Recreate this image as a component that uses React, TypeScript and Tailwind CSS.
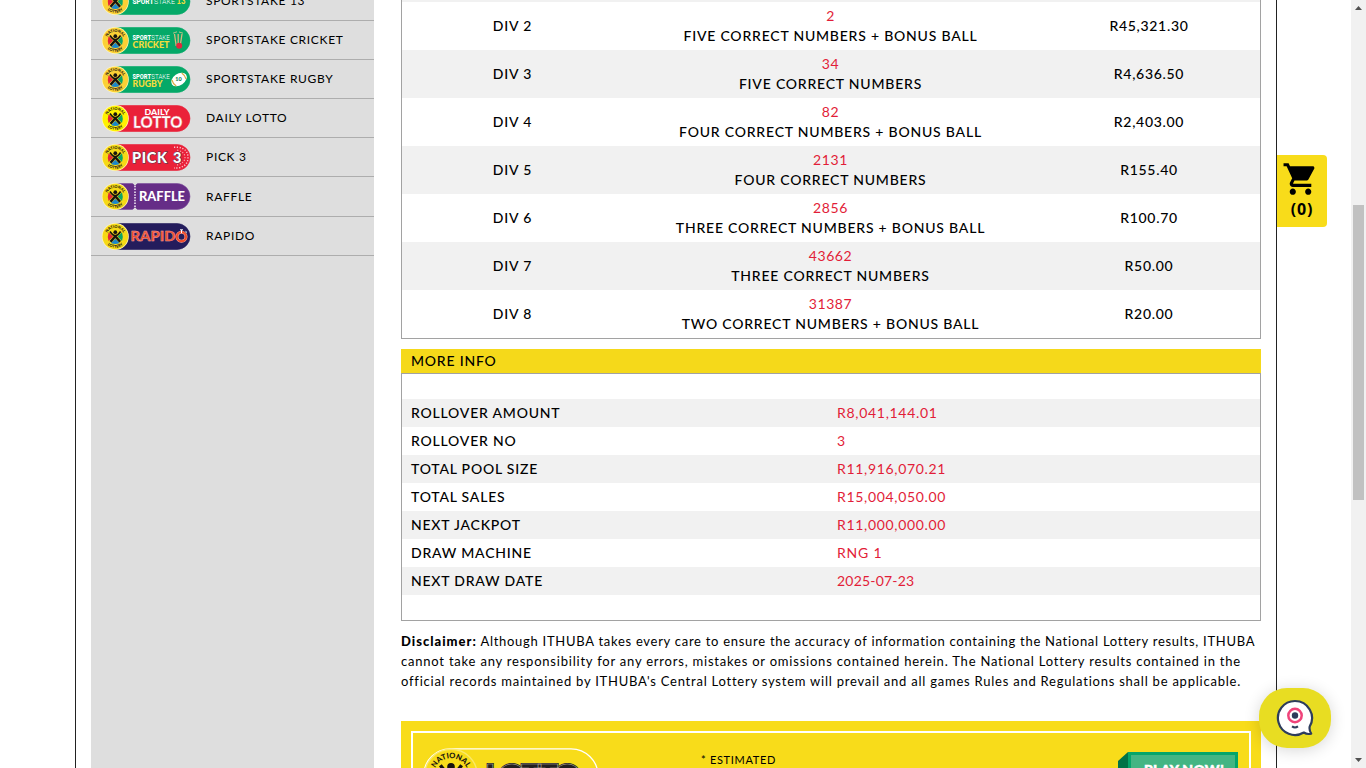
import React from "react";

const LATO = "font-['Lato','Liberation_Sans',sans-serif]";

function Emblem({ id, fill = "#f6dc1b", mono = false }: { id: string; fill?: string; mono?: boolean }) {
  const top = `${id}-top`;
  const bottom = `${id}-bottom`;
  return (
    <g>
      <circle cx="13.5" cy="13.5" r="13.5" fill={mono ? "#fbe96a" : "#fff6b8"} />
      <circle cx="13.5" cy="13.5" r="12.8" fill={fill} />
      <defs>
        <path id={top} d="M4.8 13.5a8.7 8.7 0 0 1 17.4 0" />
        <path id={bottom} d="M2.2 13.5a11.3 11.3 0 0 0 22.6 0" />
      </defs>
      {!mono && (
        <g>
          <path d="M6.8 9.2 11.2 13.6 6.8 18Q5.3 13.5 6.8 9.2Z" fill="#e32636" />
          <path d="M20.2 9.2 15.8 13.6 20.2 18Q21.7 13.5 20.2 9.2Z" fill="#0aa568" />
          <path d="M9.2 20 13.5 15.7 17.8 20Q13.5 21.8 9.2 20Z" fill="#1b86c8" />
        </g>
      )}
      <circle cx="13.5" cy="9.2" r="1.9" fill="#17130f" />
      <path d="M8.2 8.4Q11.2 12.6 13.5 12.6T18.8 8.4" fill="none" stroke="#17130f" strokeWidth="1.7" />
      <path d="M13.5 13.2 8.7 18.7M13.5 13.2l4.8 5.5" stroke="#17130f" strokeWidth="2.4" />
      <text fontFamily="Lato" fontWeight="900" fontSize="3.8" fill="#17130f" textAnchor="middle">
        <textPath href={`#${top}`} startOffset="50%">NATIONAL</textPath>
      </text>
      <text fontFamily="Lato" fontWeight="900" fontSize="3.9" fill="#17130f" textAnchor="middle">
        <textPath href={`#${bottom}`} startOffset="50%">LOTTERY</textPath>
      </text>
    </g>
  );
}

function Sport({ name, width }: { name: string; width: number }) {
  return (
    <g fontFamily="Roboto">
      <text x="31.5" y="12.8" fontSize="8" fontWeight="800" fill="#fff" textLength="18.5" lengthAdjust="spacingAndGlyphs">SPORT</text>
      <text x="50.3" y="12.8" fontSize="8" fontWeight="300" fill="#fff" textLength="18.5" lengthAdjust="spacingAndGlyphs">STAKE</text>
      <text x="31.5" y="21.4" fontSize="9" fontWeight="900" fontFamily="Lato" fill="#f6dc3b" textLength={width} lengthAdjust="spacingAndGlyphs">{name}</text>
    </g>
  );
}

function Logo({ kind }: { kind: string }) {
  const bg: Record<string, string> = {
    s13: "#05a968", cricket: "#05a968", rugby: "#05a968", daily: "#ea2139", pick: "#ea2139", raffle: "#662d87", rapido: "#241c5c",
  };
  const sport = kind === "s13" || kind === "cricket" || kind === "rugby";
  return (
    <svg className="block h-[27px] w-[90px] shrink-0" viewBox="0 0 90 27">
      <path d="M14 .5H76a13 13 0 0 1 0 26H14Z" fill={bg[kind]} stroke={kind === "raffle" ? "#7b4a9b" : bg[kind]} strokeWidth=".6" />
      <g transform="translate(.8 0)">
        <Emblem id={kind} fill={sport ? "#fbd035" : kind === "daily" ? "#fff200" : "#f6d916"} />
      </g>
      {kind === "s13" && (
        <g fontFamily="Roboto">
          <text x="31.5" y="15.5" fontSize="8" fontWeight="800" fill="#fff" textLength="21" lengthAdjust="spacingAndGlyphs">SPORT</text>
          <text x="53" y="15.5" fontSize="8" fontWeight="300" fill="#fff" textLength="21" lengthAdjust="spacingAndGlyphs">STAKE</text>
          <text x="75.5" y="15.5" fontSize="8.5" fontWeight="900" fontFamily="Lato" fill="#f6dc3b" textLength="9" lengthAdjust="spacingAndGlyphs">13</text>
        </g>
      )}
      {kind === "cricket" && (
        <g>
          <Sport name="CRICKET" width={37} />
          <path d="m73.5 7 1.7 12M77.2 7v11M81 7l-1.8 12" stroke="#d9b67c" strokeWidth="1.3" />
          <path d="m72 6.2 4-1.4M78 5l4 1.2" stroke="#e7c894" strokeWidth=".8" />
          <circle cx="78.2" cy="18.7" r="3" fill="#df293d" />
        </g>
      )}
      {kind === "rugby" && (
        <g>
          <Sport name="RUGBY" width={30} />
          <g transform="rotate(-35 78 13.5)">
            <ellipse cx="78" cy="13.5" rx="8.6" ry="5.8" fill="#fff" />
            <path d="M72 9.7q-1.5 3.8 0 7.6M84 9.7q1.5 3.8 0 7.6" stroke="#d8a83d" strokeWidth="1.2" fill="none" />
          </g>
          <text x="77.5" y="15.3" fontFamily="Lato" fontWeight="900" fontSize="5.5" fill="#177c4c" textAnchor="middle">10</text>
        </g>
      )}
      {kind === "daily" && (
        <g fontFamily="Lato" fontWeight="900" fill="#fff">
          <text x="43.5" y="9.5" fontSize="8" textLength="25" lengthAdjust="spacingAndGlyphs">DAILY</text>
          <text x="32" y="23" fontSize="16" textLength="49.5" lengthAdjust="spacingAndGlyphs" stroke="#df7781" strokeWidth=".4">LOTTO</text>
        </g>
      )}
      {kind === "pick" && (
        <g>
          <g fontFamily="Lato" fontWeight="900" fontSize="14.5" fill="#fff" stroke="#31415e" strokeWidth=".9" paintOrder="stroke">
            <text x="31" y="18.5" textLength="35">PICK</text>
            <text x="72" y="18.5">3</text>
          </g>
          <path d="M73 3.2h4q10 1.5 10 10.3T77 24h-4" fill="none" stroke="#fbc6cb" strokeWidth="1.4" strokeDasharray="1.2 1.6" />
          <path d="M76 6q8 2 8 7.5T76 21" fill="none" stroke="#f7a7af" strokeWidth="1.2" strokeDasharray="1.2 1.6" />
        </g>
      )}
      {kind === "raffle" && (
        <g>
          <path d="M34 0v27" stroke="#e5d9ec" strokeWidth="1.7" strokeDasharray="1.5 1.3" />
          <path d="M31.5 0h5L34 2.7ZM31.5 27h5L34 24.3Z" fill="#dedede" />
          <text x="38" y="18" fontFamily="Lato" fontWeight="900" fontSize="12.5" fill="#fff" textLength="46" lengthAdjust="spacingAndGlyphs">RAFFLE</text>
        </g>
      )}
      {kind === "rapido" && (
        <g>
          <text x="29.5" y="18.4" fontFamily="Lato" fontWeight="900" fontSize="14" fill="#ef4d2d" stroke="#f7a9a0" strokeWidth=".4" textLength="45" lengthAdjust="spacingAndGlyphs">RAPID</text>
          <circle cx="80.5" cy="13.7" r="4.5" fill="none" stroke="#f7b0a5" strokeWidth="3" />
          <circle cx="80.5" cy="13.7" r="4.5" fill="none" stroke="#ef4d2d" strokeWidth="2.2" />
          <path d="M80.5 7v3M79 6.8h3M84.5 8.300l1.500 1.200" stroke="#fff" strokeWidth="1" />
        </g>
      )}
    </svg>
  );
}

const games = [
  { kind: "s13", name: "SPORTSTAKE 13", row: "h-[39px]" },
  { kind: "cricket", name: "SPORTSTAKE CRICKET", row: "h-[39px]" },
  { kind: "rugby", name: "SPORTSTAKE RUGBY", row: "h-[39px]" },
  { kind: "daily", name: "DAILY LOTTO", row: "h-[39px]" },
  { kind: "pick", name: "PICK 3", row: "h-[39px]" },
  { kind: "raffle", name: "RAFFLE", row: "h-[40px]" },
  { kind: "rapido", name: "RAPIDO", row: "h-[39px]" },
];

const divisions = [
  ["DIV 2", "2", "FIVE CORRECT NUMBERS + BONUS BALL", "R45,321.30"],
  ["DIV 3", "34", "FIVE CORRECT NUMBERS", "R4,636.50"],
  ["DIV 4", "82", "FOUR CORRECT NUMBERS + BONUS BALL", "R2,403.00"],
  ["DIV 5", "2131", "FOUR CORRECT NUMBERS", "R155.40"],
  ["DIV 6", "2856", "THREE CORRECT NUMBERS + BONUS BALL", "R100.70"],
  ["DIV 7", "43662", "THREE CORRECT NUMBERS", "R50.00"],
  ["DIV 8", "31387", "TWO CORRECT NUMBERS + BONUS BALL", "R20.00"],
];

const info = [
  { label: "ROLLOVER AMOUNT", value: "R8,041,144.01", track: "tracking-[0.7px]" },
  { label: "ROLLOVER NO", value: "3", track: "tracking-[0.7px]" },
  { label: "TOTAL POOL SIZE", value: "R11,916,070.21", track: "tracking-[0.68px]" },
  { label: "TOTAL SALES", value: "R15,004,050.00", track: "tracking-[0.68px]" },
  { label: "NEXT JACKPOT", value: "R11,000,000.00", track: "tracking-[0.68px]" },
  { label: "DRAW MACHINE", value: "RNG 1", track: "tracking-[0.8px]" },
  { label: "NEXT DRAW DATE", value: "2025-07-23", track: "tracking-[0.2px]" },
];

function Sidebar() {
  return (
    <aside className="h-[768px] w-[283px] shrink-0 overflow-hidden bg-[#dedede]">
      <div className="-mt-[18px]">
        {games.map((g) => (
          <div key={g.kind} className={`flex items-center border-b border-[#adadad] pl-[10px] ${g.row}`}>
            <Logo kind={g.kind} />
            <span className="ml-[15px] text-[12px] tracking-[0.68px] text-black">{g.name}</span>
          </div>
        ))}
      </div>
    </aside>
  );
}

function Banner() {
  return (
    <section className="mt-[30px] h-[120px] bg-[#f8dc1a] p-[10px]">
      <div className="flex h-full items-start border-2 border-white">
        <svg className="ml-[10px] mt-[14px] block h-[54px] w-[178px]" viewBox="0 0 178 54">
          <path d="M27 1.8H148a27 27 0 0 1 27 27V54H1V27A26 26 0 0 1 27 1.8Z" fill="#f8dc1a" stroke="#fff" strokeWidth="1.3" />
          <g transform="translate(1 1.5) scale(2)">
            <Emblem id="banner" fill="#f8dc1a" mono />
          </g>
          <g fontFamily="Lato" fontWeight="900" fontSize="34" fill="#231f20">
            <text x="62" y="42" textLength="96" stroke="#231f20" strokeWidth="2">LOTTO</text>
            <text x="62" y="42" textLength="96" fill="none" stroke="#b5aea0" strokeWidth=".6">LOTTO</text>
          </g>
        </svg>
        <span className="ml-[100px] mt-[20px] w-[300px] text-[11px] leading-[13px] tracking-[0.7px] text-black">* ESTIMATED</span>
        <svg className="ml-[116px] mt-[18px] block h-[50px] w-[122px]" viewBox="0 0 122 50">
          <path d="M1 10 11 1v40H1Z" fill="#007347" />
          <path d="M11 1h110v45H11Z" fill="#05a56a" />
          <path d="M14 4h104v42H14Z" fill="#43b583" />
          <text x="27" y="23.6" fontFamily="Lato" fontWeight="900" fontSize="14" fill="#fff" stroke="#fff" strokeWidth=".5" textLength="80">PLAY NOW!</text>
        </svg>
      </div>
    </section>
  );
}

export default function App() {
  return (
    <div className={`relative flex h-[768px] w-[1366px] overflow-hidden bg-white pl-[75px] ${LATO}`}>
      <div className="flex w-[1202px] shrink-0 border-x border-[#222] pl-[15px]">
        <Sidebar />
        <main className="ml-[27px] w-[860px] shrink-0">
          <section className="border-x border-b border-[#a2a2a2] text-[14px] leading-[20px] text-black">
            <div className="h-[2px] bg-[#f1f1f1]" />
            {divisions.map(([div, count, label, amount], i) => (
              <div key={div} className={`grid h-[48px] grid-cols-[221px_415px_222px] items-center text-center ${i % 2 ? "bg-[#f1f1f1]" : "bg-white"}`}>
                <span className="font-medium tracking-[0.8px]">{div}</span>
                <span>
                  <span className="block tracking-[0.6px] text-[#e21d38]">{count}</span>
                  <span className="block whitespace-nowrap font-medium tracking-[0.79px]">{label}</span>
                </span>
                <span className="font-medium tracking-[0.7px]">{amount}</span>
              </div>
            ))}
          </section>

          <section className="mt-[10px] text-[14px] font-medium tracking-[0.79px] text-black">
            <h2 className="h-[24px] bg-[#f5d91a] pl-[10px] leading-[24px]">MORE INFO</h2>
            <div className="border border-[#a2a2a2] py-[25px]">
              {info.map(({ label, value, track }, i) => (
                <div key={label} className={`grid h-[28px] grid-cols-[426px_1fr] pl-[9px] leading-[27px] ${i % 2 ? "bg-white" : "bg-[#f1f1f1]"}`}>
                  <span>{label}</span>
                  <span className={`font-normal text-[#e21d38] ${track}`}>{value}</span>
                </div>
              ))}
            </div>
          </section>

          <p className="mt-[10px] text-[13px] leading-[20px] text-black">
            <span className="block whitespace-nowrap tracking-[0.72px]"><b className="font-black tracking-[1px]">Disclaimer:</b> Although ITHUBA takes every care to ensure the accuracy of information containing the National Lottery results, ITHUBA</span>
            <span className="block whitespace-nowrap tracking-[0.785px]">cannot take any responsibility for any errors, mistakes or omissions contained herein. The National Lottery results contained in the</span>
            <span className="block whitespace-nowrap tracking-[0.767px]">official records maintained by ITHUBA's Central Lottery system will prevail and all games Rules and Regulations shall be applicable.</span>
          </p>
          <Banner />
        </main>
      </div>

      <div className="mt-[155px] flex h-[72px] w-[50px] flex-col items-center rounded-r-[4px] bg-[#f8dc1a]">
        <svg className="-ml-[3px] mt-[5px] block h-[38px] w-[37px] shrink-0" viewBox="0 0 24 24" preserveAspectRatio="none">
          <path d="M7 18c-1.100 0-1.990.9-1.990 2S5.900 22 7 22s2-.9 2-2-.9-2-2-2zM1 2v2h2l3.600 7.590-1.350 2.450c-.16.28-.25.61-.25.96 0 1.100.9 2 2 2h12v-2H7.420c-.14 0-.25-.11-.25-.25l.03-.12.9-1.630h7.450c.75 0 1.410-.41 1.750-1.030l3.580-6.490c.08-.14.12-.31.12-.48 0-.55-.45-1-1-1H5.210l-.94-2H1zm16 16c-1.100 0-1.990.9-1.990 2s.89 2 1.990 2 2-.9 2-2-.9-2-2-2z" />
        </svg>
        <span className="font-['Open_Sans',sans-serif] text-[16px] font-bold leading-[22px] tracking-[0.8px] text-black">(0)</span>
      </div>

      <div className="ml-auto flex h-[768px] w-[15px] flex-col items-center bg-[#f1f1f1]">
        <svg className="h-[17px] w-[15px] shrink-0" viewBox="0 0 15 17"><path d="M4 10h7L7.500 6Z" fill="#505050" /></svg>
        <div className="mt-[188px] h-[295px] w-[11px] bg-[#c1c1c1]" />
        <svg className="mt-auto h-[17px] w-[15px] shrink-0" viewBox="0 0 15 17"><path d="M4 7h7l-3.500 4Z" fill="#505050" /></svg>
      </div>

      <button className="absolute left-[1259px] top-[688px] flex h-[60px] w-[72px] items-center justify-center rounded-[28px] bg-[#e8dd22] shadow-[0_2px_16px_rgba(0,0,0,0.16)]">
        <svg className="h-[38px] w-[38px]" viewBox="0 0 38 38">
          <path d="M19 2a17 17 0 1 0 8.800 31.500q3.200 2.200 7.400 1.200-2.200-3.300-1.500-7.200A17 17 0 0 0 19 2Z" fill="#fff" stroke="#2d3d5c" strokeWidth="2.200" strokeLinejoin="round" />
          <circle cx="19" cy="16.500" r="6.700" fill="#fff" stroke="#f0437a" strokeWidth="2.500" />
          <circle cx="19" cy="16.500" r="3.200" fill="#2d3d5c" />
          <path d="M16 27.400q3 2 6 0" fill="none" stroke="#2d3d5c" strokeWidth="2" />
        </svg>
      </button>
    </div>
  );
}
